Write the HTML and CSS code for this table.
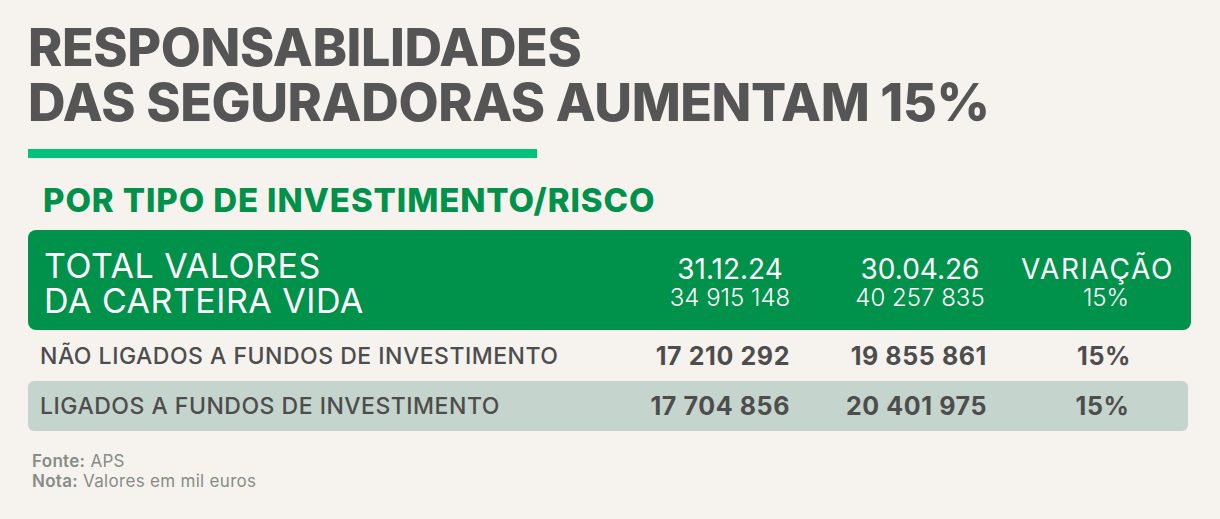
FILE: index.html
```html
<!DOCTYPE html>
<html lang="pt">
<head>
<meta charset="utf-8">
<title>Responsabilidades das seguradoras</title>
<link rel="stylesheet" href="styles.css">
</head>
<body>
<main class="page">
  <h1 class="title"><span class="tline">RESPONSABILIDADES</span><span class="tline">DAS SEGURADORAS AUMENTAM 15%</span></h1>
  <div class="rule"></div>
  <h2 class="subtitle">POR TIPO DE INVESTIMENTO/RISCO</h2>
  <section class="table">
    <div class="head">
      <div class="head-label">TOTAL VALORES<br>DA CARTEIRA VIDA</div>
      <div class="head-col c1"><span class="date">31.12.24</span><span class="num">34 915 148</span></div>
      <div class="head-col c2"><span class="date">30.04.26</span><span class="num">40 257 835</span></div>
      <div class="head-col c3"><span class="date wide">VARIAÇÃO</span><span class="num pct">15%</span></div>
    </div>
    <div class="row">
      <div class="row-label">NÃO LIGADOS A FUNDOS DE INVESTIMENTO</div>
      <div class="val v1">17 210 292</div>
      <div class="val v2">19 855 861</div>
      <div class="val v3">15%</div>
    </div>
    <div class="row alt">
      <div class="row-label">LIGADOS A FUNDOS DE INVESTIMENTO</div>
      <div class="val v1">17 704 856</div>
      <div class="val v2">20 401 975</div>
      <div class="val v3">15%</div>
    </div>
  </section>
  <footer class="notes">
    <p><b>Fonte:</b> APS</p>
    <p><b>Nota:</b> Valores em mil euros</p>
  </footer>
</main>
</body>
</html>
```
FILE: styles.css
```css
html, body {
  margin: 0;
  padding: 0;
}
body {
  background: #f6f3ef;
  font-family: Inter, "Open Sans", sans-serif;
  color: #555555;
  width: 1220px;
  height: 519px;
  overflow: hidden;
}
.page {
  padding: 20px 0 0 28px;
}
.title {
  margin: 0;
  font-size: 52px;
  line-height: 55px;
  font-weight: 800;
  color: #555555;
  letter-spacing: -0.4px;
}
.tline {
  display: block;
  height: 55px;
}
.rule {
  margin-top: 19px;
  width: 509px;
  height: 9px;
  background: #00c27c;
}
.subtitle {
  margin: 22px 0 0 15px;
  font-size: 33px;
  line-height: 40px;
  font-weight: 800;
  letter-spacing: 0.9px;
  color: #00914a;
}
.table {
  margin-top: 10px;
  width: 1163px;
}
.head,
.row {
  display: grid;
  grid-template-columns: 622px 160px 220px minmax(0, 1fr);
}
.head {
  background: #00914a;
  border-radius: 8px;
  color: #ffffff;
  height: 100px;
  box-sizing: border-box;
  padding-top: 18px;
}
.head-label {
  padding-left: 16px;
  font-size: 34px;
  line-height: 35px;
  font-weight: 400;
  letter-spacing: 0.5px;
}
.head-col {
  display: flex;
  flex-direction: column;
  align-items: center;
  padding-top: 6px;
  white-space: nowrap;
  min-width: 0;
}
.head-col.c3 {
  padding-right: 26px;
}
.date {
  font-size: 28px;
  line-height: 30px;
  font-weight: 400;
}
.date.wide {
  letter-spacing: 1.6px;
}
.num {
  font-size: 24px;
  line-height: 28px;
  font-weight: 300;
}
.num.pct {
  margin-left: 17px;
}
.row {
  height: 51px;
  align-items: center;
  color: #4d4d4d;
}
.row.alt {
  height: 50px;
  width: 1160px;
  background: #c5d4cc;
  border-radius: 6px;
}
.row-label {
  padding-left: 12px;
  font-size: 23px;
  font-weight: 500;
  letter-spacing: 0.5px;
  white-space: nowrap;
}
.val {
  font-size: 25px;
  font-weight: 700;
  letter-spacing: 0.6px;
  white-space: nowrap;
}
.v1 {
  text-align: right;
  padding-right: 20px;
}
.v2 {
  text-align: right;
  padding-right: 43px;
}
.v3 {
  text-align: center;
  padding-right: 13px;
}
.notes {
  margin: 20px 0 0 4px;
  color: #878c86;
  font-size: 17px;
  line-height: 20px;
  letter-spacing: 0.3px;
}
.notes p {
  margin: 0;
}
.notes b {
  font-weight: 600;
}
```
